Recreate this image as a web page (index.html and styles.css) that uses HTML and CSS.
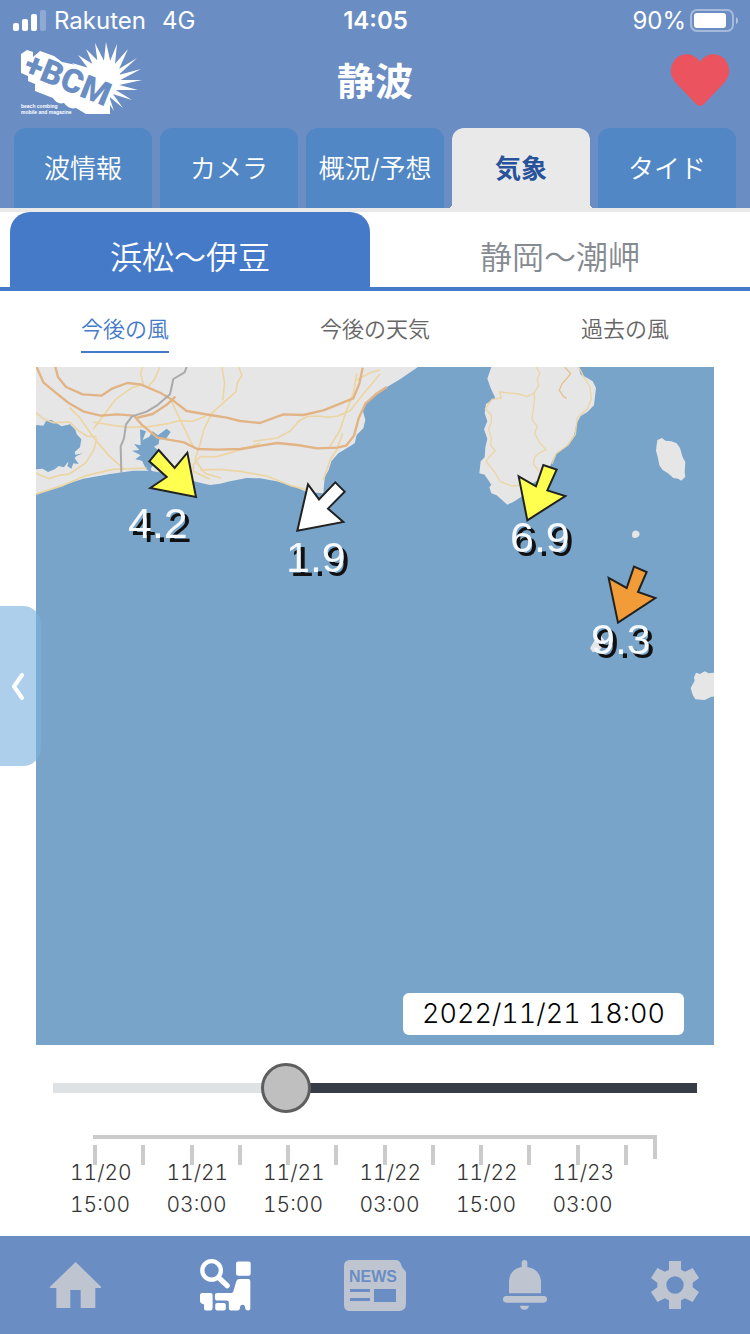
FILE: index.html
```html
<!DOCTYPE html>
<html lang="ja">
<head>
<meta charset="utf-8">
<meta name="viewport" content="width=device-width, initial-scale=1">
<title>静波 気象</title>
<link rel="stylesheet" href="styles.css">
</head>
<body>
<div class="app">
  <header class="header">
    <div class="status">
      <div class="status-left">
        <svg class="signal" viewBox="0 0 33 21" aria-hidden="true"><rect x="0" y="13" width="6" height="8" rx="2"/><rect x="9" y="9" width="6" height="12" rx="2"/><rect x="18" y="4" width="6" height="17" rx="2"/><rect x="27" y="0" width="6" height="21" rx="2" opacity=".25"/></svg>
        <span>Rakuten</span><span class="network">4G</span>
      </div>
      <div class="clock">14:05</div>
      <div class="status-right">
        <span>90%</span>
        <svg class="battery" viewBox="0 0 48 23" aria-hidden="true"><rect x="1" y="1" width="42" height="21" rx="6" fill="none" stroke="#fff" stroke-opacity=".4" stroke-width="2"/><rect x="4" y="4" width="32" height="15" rx="3"/><path d="M46 8q2 1 2 3.500t-2 3.500z" opacity=".5"/></svg>
      </div>
    </div>
    <div class="brand">
      <a class="logo" href="#" aria-label="BCM">
        <svg viewBox="0 0 124 76" aria-hidden="true">
          <g class="logo-rays">
            <path d="M86 0l-3 27h9zM97 2l-11 27 8 3zM75 1l4 30 9-4zM108 7l-22 25 9 4zM66 7l12 28 8-8zM117 16l-28 17 3 6zM58 13l18 24 8-8zM121 27l-30 8 2 7zM52 21l22 17 8-8zM122 38l-32 0 0 7zM118 48l-30-8-2 8zM112 58l-26-16-3 7zM103 66l-18-25-5 6zM94 69l-9-27-6 5z"/>
            <circle cx="86" cy="34" r="14"/>
          </g>
          <path class="logo-block" d="M1 12l6-4 6 2v5l7-6 14 5 8 6 14 3 12 8 22 8v33H66l-10-6q-7 2-12-5-7 2-11-5l-18-7v-7l-7-3v-5l-7-3z"/>
          <text class="logo-mark" x="2" y="31" transform="rotate(22 2 31)">+BCM</text>
          <text class="logo-sub" x="1" y="66">beach combing</text>
          <text class="logo-sub" x="1" y="72">mobile and magazine</text>
        </svg>
      </a>
      <h1 class="title">静波</h1>
      <button class="favorite" type="button" aria-label="お気に入り">
        <svg viewBox="0 0 60 53" aria-hidden="true"><path d="M30 8C36-2 50-2 56 7c5 8 4 15-2 22L34 50q-4 4-8 0L6 29C0 22-1 15 4 7 10-2 24-2 30 8z"/></svg>
      </button>
    </div>
    <nav class="tabs" aria-label="メニュー">
      <a class="tab" href="#">波情報</a>
      <a class="tab" href="#">カメラ</a>
      <a class="tab" href="#">概況/予想</a>
      <a class="tab tab-current" href="#" aria-current="page">気象</a>
      <a class="tab" href="#">タイド</a>
    </nav>
  </header>

  <main class="main">
    <nav class="regions" aria-label="エリア">
      <a class="region region-current" href="#">浜松〜伊豆</a>
      <a class="region" href="#">静岡〜潮岬</a>
    </nav>
    <nav class="views" aria-label="表示">
      <a class="view view-current" href="#">今後の風</a>
      <a class="view" href="#">今後の天気</a>
      <a class="view" href="#">過去の風</a>
    </nav>

    <div class="map-area">
      <figure class="map">
        <svg class="map-drawing" viewBox="0 0 678 678" role="img" aria-label="風の地図">
          <g transform="translate(-6 -7) scale(.33333)">
            <path class="land" d="M18 21H1164L1110 58 1070 82 1046 94 1025 110 1010 130 998 150 1006 180 1000 205 980 225 974 250 945 268 925 280 904 304 896 330 884 352 880 400 830 396 790 378 740 364 690 355 650 354 600 364 570 371 540 375 500 366 440 345 360 332 310 332 240 342 160 356 80 382 18 404z"/>
            <path class="water" d="M18 195l22 2 8-14 15-4 12 8 20 12 25-6 16 16 4 14 14 15-4 24-16 14 4 14-12 10-14 8-10 14-16-4-12 10-20 8-16-10-20 2z"/>
            <path class="water" d="M118 268l12 18 28-6-26 12 14 20-16-2-6 16-12-8 6-20-14-10z"/>
            <path class="water" d="M330 208l18 6-10 26 20-10 10-16 16 12 26-20 12 10-14 20-20 2-2 14-14 8 16 14-4 14 16-2-2 18-22 2-14 20 10 20-24-20-12-24-20-4 16-12-26-14 22-2-16-18 20 4z"/>
            <g class="road">
              <path d="M18 158l22 18 30 12 50-2 20 22 30 20 30 2M118 142l30 30 50 70 38 44 44 40M18 340l40 16 30-10 30-4 50-34 24-40 8-32M18 402l82-26 70-30 80-18 100-4M338 21l-6 20 8 32-34 10-50 36-34 46-32 42M390 21l-16 36-18 22M420 115l20 42 26 54 24 50M190 186l58 10 50 6 60-2 60-10 30-8 40 2 40-16M626 21l10 24-14 24-4 26-34 30-39 35-24 50-10 40-16 50 30 40 48 14M576 21l8 50-6 50M980 60l40-22 30-8M1050 42l-50 60-40 50-36 16-30 4-30-4-34 2-24 14-24 28-40 22-72 10M690 250l-60 20-70 20-50 0-20 24 0 20 50 24M900 260l30-50 20-60 20-50 10-60M510 330l60-2 60 6 80 14 70 28 60 16M880 360l20-60 20-30 18-50"/>
            </g>
            <g class="highway">
              <path d="M76 21l8 30 24 30 50 22 56 4 34-22 44-16 40 4 60 26 34 20 44 34 70 12 50 8 40 10 60 6 70-26 60 2 60-14 90-36 18-44 10-48M20 21l20 46 36 30 40 32 46 26 50 12 50-4 50 4 22 26 48 40 80 14 40 20 60 2 70-2 60-10 50-8 60 6 60 10 60-2 26-6 24-30 14-52 20-44 34-30 30-20M318 174l50-12 40-26 28-26"/>
            </g>
            <path class="rail" d="M470 21l-6 16-34 20-10 46-40 34-30 18-44 14-18 24-6 42-10 24 2 80"/>
          </g>
          <g transform="translate(414 -7) scale(.33333)">
            <path class="land" d="M124 21L386 21 392 44 408 52 428 64 438 84 432 136 412 156 392 168 380 190 372 226 350 258 320 278 308 300 290 345 230 380 214 410 190 426 172 434 140 406 124 400 118 382 124 374 104 344 88 340 92 304 104 292 106 262 112 236 102 208 112 184 104 160 108 132 136 114 122 84 112 56z"/>
            <path class="land" d="M622 240l14-6 10 8 18 2 16 6 10 14 8 28 8 14-2 30 2 14-12 12-10-6-14-2-16-14-16-10-10-14-4-22-6-22 2-18zM546 522q3-12 15-10 12 4 6 16-8 9-20 4zM792 938l-16 2-12-6-14 8-12-4-6 14 2 10-12 22 6 20 8 14 28 2 20-10h10zM420 865l18-32 16-4 14 18-22 26-18 4z"/>
            <path class="road road-thin" d="M258 21l12 18-8 18 4 20-14 22 2 14-8 66 16 20-8 20 14 28 20 22-20 10-14 12-4 20 16 22M256 96l-24 14-26-8-58-6 6 18-28 4-20 28 18 20 0 20-8 20 8 30-2 20 14 16-18 18-10 14 26 32 16 28 36 14 50-4M386 21l18 34 16 26 4 36-12 30-30 26-6 50-22 32-36 26-12 30"/>
            <path class="road road-thin road-deep" d="M344 21l18 20-18 22-8 8-8 20 12 18 10 6"/>
          </g>
          <g class="arrow" transform="translate(-6 -7) scale(.33333)">
            <path fill="#ffff4f" d="M386 270l48 54 38-46 26 133-137-27 49-33-52-47z"/>
            <path fill="#fff" d="M834 373l33 45 49-51 28 28-50 51 46 40-138 26z"/>
          </g>
          <g class="arrow" transform="translate(414 -7) scale(.33333)">
            <path fill="#ffff4f" d="M206 349l52 30 22-64 40 14-28 62 54 17-114 73z"/>
            <path fill="#f19c38" d="M476 654l54 30 22-64 38 16-26 60 52 18-112 74z"/>
          </g>
          <g class="wind">
            <text x="92" y="171">4.2</text>
            <text x="250" y="205">1.9</text>
            <text x="474" y="185">6.9</text>
            <text x="555" y="287">9.3</text>
          </g>
        </svg>
        <figcaption class="stamp">2022/11/21 18:00</figcaption>
      </figure>
      <button class="drawer" type="button" aria-label="開く">
        <svg viewBox="0 0 14 29" aria-hidden="true"><path d="M11 3L3 14.500 11 26"/></svg>
      </button>
    </div>

    <div class="timeline">
      <input class="slider" type="range" min="0" max="20" value="7" aria-label="日時">
      <div class="axis" aria-hidden="true">
        <div class="axis-line"></div>
        <div class="ticks"><i></i><i></i><i></i><i></i><i></i><i></i><i></i><i></i><i></i><i></i><i></i><i></i></div>
      </div>
      <ol class="dates">
        <li>11/20<br>15:00</li>
        <li>11/21<br>03:00</li>
        <li>11/21<br>15:00</li>
        <li>11/22<br>03:00</li>
        <li>11/22<br>15:00</li>
        <li>11/23<br>03:00</li>
      </ol>
    </div>
  </main>

  <nav class="bottom" aria-label="メイン">
    <a class="bottom-item" href="#" aria-label="ホーム"><svg class="icon-home" viewBox="147 96 153 138"><path d="M224 96L300 170v4H283v60H239V180H208v54H166v-60H147v-4z"/></svg></a>
    <a class="bottom-item bottom-current" href="#" aria-label="検索"><svg class="icon-search" viewBox="597 87 154 156"><circle cx="632" cy="121" r="28" fill="none" stroke="currentColor" stroke-width="13"/><path d="M655 144l24 23" stroke="currentColor" stroke-width="16" stroke-linecap="round"/><rect x="706" y="94" width="44" height="43" rx="6"/><path d="M604 189h25q6 0 6 6v40q0 7-7 7h-13q-6 0-6-7v-11l-10-5q-2-3-2-8v-16q0-6 7-6zM650 189h43q4-2 5-6l8-28q2-8 9-8h28q6 0 6 6v82q0 7-7 7-8 0-9-9 0-8-7-8-8 0-8 8-1 9-7 9h-20q-7 0-7-7v-17q0-6-7-6h-26q-9 0-9-7v-9q0-7 8-7zM649 219h20q6 0 6 6v11q0 6-6 6h-20q-6 0-6-6v-11q0-6 6-6z"/></svg></a>
    <a class="bottom-item" href="#" aria-label="ニュース"><svg class="icon-news" viewBox="0 0 62 51"><path d="M6 0h46q3 0 5 4l1 3 4 5v31q0 8-7 8H6q-6 0-6-6V6q0-6 6-6z"/><path class="cut" d="M6 29h20v3H6zM6 38h20v3H6zM30 29h22v13H30z"/><text x="5" y="22">NEWS</text></svg></a>
    <a class="bottom-item" href="#" aria-label="通知"><svg class="icon-bell" viewBox="387 87 132 150"><path d="M443 108V95q0-8 8-8 9 0 9 8v13q37 6 41 43v36H405v-36q2-36 38-43zM397 195h112q10 0 10 10t-10 10H397q-10 0-10-10t10-10zM438 224h27q-2 12-14 12t-13-12z"/></svg></a>
    <a class="bottom-item" href="#" aria-label="設定"><svg class="icon-gear" viewBox="828 93 144 144"><path fill-rule="evenodd" d="M882 93h36v26l12 6 23-11 19 30-19 14v14l19 14-19 30-23-11-12 6v26h-36v-26l-12-6-23 11-19-30 19-14v-14l-19-14 19-30 23 11 12-6zM900 139a26 26 0 100 52 26 26 0 000-52z"/></svg></a>
  </nav>
</div>
</body>
</html>
```
FILE: styles.css
```css
:root {
  --bar: #6a8dc3;
  --blue: #457ac9;
  --sea: #78a4c9;
  --land: #e6e6e6;
  --muted: #bec5d1;
}

* {
  box-sizing: border-box;
}

body {
  margin: 0;
  background: #fff;
  font-family: "Inter", "Noto Sans CJK JP", sans-serif;
  font-weight: 350;
  color: #333;
}

a {
  color: inherit;
  text-decoration: none;
}

button {
  padding: 0;
  border: 0;
  background: none;
}

svg {
  display: block;
  fill: currentColor;
}

.app {
  display: flex;
  flex-direction: column;
  min-height: 100vh;
}

/* Header */
.header {
  background: var(--bar);
  border-bottom: 4px solid #e9e9e9;
  color: #fff;
}

.status {
  display: grid;
  grid-template-columns: 1fr auto 1fr;
  align-items: center;
  height: 40px;
  padding: 0 12px 0 13px;
  font-size: 24px;
  font-weight: 400;
}

.status-left,
.status-right {
  display: flex;
  align-items: center;
  gap: 8px;
}

.status-right {
  justify-content: flex-end;
  gap: 4px;
}

.network {
  margin-left: 8px;
}

.signal {
  width: 33px;
  height: 21px;
}

.battery {
  width: 48px;
  height: 23px;
}

.clock {
  font-weight: 600;
}

.brand {
  display: grid;
  grid-template-columns: 1fr auto 1fr;
  align-items: center;
  height: 88px;
  padding: 0 20px 8px;
}

.logo svg {
  width: 124px;
  height: 76px;
}

.logo-mark {
  fill: var(--bar);
  stroke: #fff;
  stroke-width: 2px;
  paint-order: stroke;
  font: 900 33px Roboto, "Liberation Sans", sans-serif;
}

.logo-sub {
  font: 700 5px "Liberation Sans", sans-serif;
}

.title {
  margin: 0;
  padding-top: 2px;
  font-size: 38px;
  line-height: 48px;
  font-weight: 700;
}

.favorite {
  justify-self: end;
  color: #eb545e;
}

.favorite svg {
  width: 60px;
  height: 53px;
}

.tabs {
  display: grid;
  grid-template-columns: repeat(5, 1fr);
  gap: 8px;
  padding: 0 14px;
}

.tab {
  display: flex;
  align-items: center;
  justify-content: center;
  height: 80px;
  padding-bottom: 4px;
  border-radius: 12px 12px 0 0;
  background: #5187c4;
  font-size: 26px;
  white-space: nowrap;
}

.tab-current {
  position: relative;
  background: #e9e9e9;
  color: #28539b;
  font-weight: 700;
}

.tab-current::before,
.tab-current::after {
  content: "";
  position: absolute;
  bottom: 0;
  width: 4px;
  height: 4px;
}

.tab-current::before {
  right: 100%;
  background: radial-gradient(circle at 0 0, transparent 4px, #e9e9e9 4px);
}

.tab-current::after {
  left: 100%;
  background: radial-gradient(circle at 100% 0, transparent 4px, #e9e9e9 4px);
}

/* Area and view switches */
.main {
  flex: 1;
}

.regions {
  display: grid;
  grid-template-columns: 1fr 1fr;
  gap: 10px;
  padding: 0 10px;
  border-bottom: 4px solid var(--blue);
}

.region {
  height: 75px;
  padding-top: 22px;
  border-radius: 20px 20px 0 0;
  color: #868a91;
  font-size: 32px;
  line-height: 48px;
  text-align: center;
}

.region-current {
  background: var(--blue);
  color: #fff;
}

.views {
  display: grid;
  grid-template-columns: repeat(3, 1fr);
  justify-items: center;
  height: 76px;
  padding-top: 20px;
}

.view {
  height: 42px;
  color: #666;
  font-size: 22px;
  line-height: 36px;
}

.view-current {
  border-bottom: 2px solid var(--blue);
  color: var(--blue);
}

/* Map */
.map-area {
  position: relative;
  padding: 0 36px;
}

.map {
  position: relative;
  margin: 0;
  background: var(--sea);
}

.map-drawing {
  width: 100%;
  height: auto;
}

.land {
  fill: var(--land);
}

.water {
  fill: var(--sea);
}

.road,
.highway,
.rail {
  fill: none;
  stroke: #ecd5a3;
  stroke-width: 5px;
  stroke-linejoin: round;
}

.road-thin {
  stroke-width: 4px;
}

.road-deep {
  stroke: #e6c08c;
}

.highway {
  stroke: #e2b384;
  stroke-width: 7px;
}

.rail {
  stroke: #aaa;
  stroke-width: 6px;
}

.arrow {
  stroke: #222;
  stroke-width: 6px;
}

.wind {
  fill: #f4f8ff;
  font: 400 43px "Liberation Sans", sans-serif;
  filter: drop-shadow(4px 4px 0 #111);
}

.stamp {
  position: absolute;
  right: 30px;
  bottom: 10px;
  padding: 0 19px;
  border-radius: 6px;
  background: #fff;
  color: #000;
  font-size: 27px;
  font-variant-numeric: tabular-nums;
  font-weight: 350;
  line-height: 42px;
}

.drawer {
  position: absolute;
  top: 239px;
  left: 0;
  width: 41px;
  height: 160px;
  padding-left: 11px;
  border-radius: 0 18px 18px 0;
  background: rgba(122, 178, 222, 0.62);
}

.drawer svg {
  width: 14px;
  height: 29px;
  fill: none;
  stroke: #fff;
  stroke-width: 4px;
  stroke-linecap: round;
  stroke-linejoin: round;
}

/* Time slider */
.slider {
  display: block;
  appearance: none;
  width: calc(100% - 106px);
  height: 50px;
  margin: 18px 53px 22px;
  background: linear-gradient(to right, #dee2e5 36%, #373d47 36%) center / 100% 10px no-repeat;
}

.slider::-webkit-slider-thumb {
  appearance: none;
  width: 50px;
  height: 50px;
  border: 3px solid #5e5e5e;
  border-radius: 50%;
  background: #bfbfbf;
}

.axis {
  display: grid;
}

.axis-line,
.ticks {
  grid-area: 1 / 1;
}

.axis-line {
  height: 24px;
  margin: 0 93px;
  border: solid #cbcbcb;
  border-width: 4px 4px 0 0;
}

.ticks {
  display: grid;
  grid-template-columns: repeat(12, 1fr);
  padding: 10px 78px 0 93px;
}

.ticks i {
  width: 4px;
  height: 20px;
  background: #cbcbcb;
}

.dates {
  display: grid;
  grid-template-columns: repeat(6, 1fr);
  margin: 0;
  padding: 0 101px 14px 70px;
  list-style: none;
  font-size: 21px;
  font-variant-numeric: tabular-nums;
  font-weight: 350;
  line-height: 32px;
}

.dates li {
  margin-top: -8px;
}

/* Bottom bar */
.bottom {
  display: grid;
  grid-template-columns: repeat(5, 1fr);
  height: 98px;
  background: var(--bar);
  color: var(--muted);
}

.bottom-item {
  display: flex;
  align-items: center;
  justify-content: center;
}

.bottom-current {
  color: #fff;
}

.icon-home {
  width: 51px;
  height: 46px;
}

.icon-search {
  width: 51px;
  height: 52px;
}

.icon-news {
  width: 62px;
  height: 51px;
  fill: var(--muted);
}

.icon-news text {
  fill: var(--bar);
  font: 700 16px "Liberation Sans", sans-serif;
}

.cut {
  fill: var(--bar);
}

.icon-bell {
  width: 44px;
  height: 50px;
}

.icon-gear {
  width: 48px;
  height: 48px;
}
```
